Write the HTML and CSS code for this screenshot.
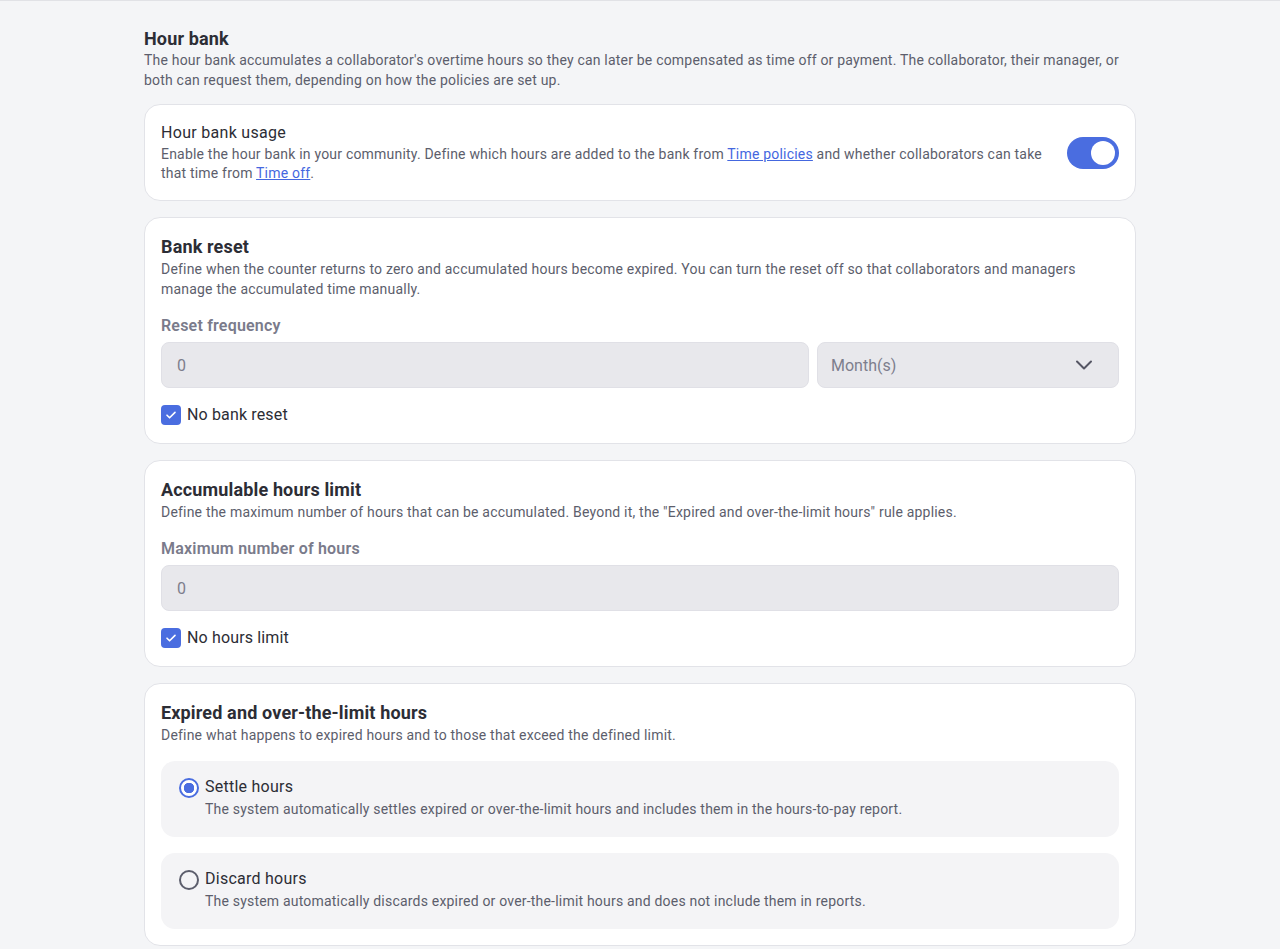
FILE: index.html
```html
<!DOCTYPE html>
<html lang="en">
<head>
  <meta charset="UTF-8">
  <title>Hour bank</title>
  <link rel="stylesheet" href="styles.css">
</head>
<body>

  <div class="page">

    <div class="intro">
      <h1>Hour bank</h1>
      <p>The hour bank accumulates a collaborator's overtime hours so they can later be compensated as time off or payment. The collaborator, their manager, or both can request them, depending on how the policies are set up.</p>
    </div>

    <div class="card card-row">
      <div>
        <h3>Hour bank usage</h3>
        <p>Enable the hour bank in your community. Define which hours are added to the bank from <a href="#">Time policies</a> and whether collaborators can take that time from <a href="#">Time off</a>.</p>
      </div>
      <span class="toggle on"><span class="knob"></span></span>
    </div>

    <div class="card">
      <h2>Bank reset</h2>
      <p>Define when the counter returns to zero and accumulated hours become expired. You can turn the reset off so that collaborators and managers manage the accumulated time manually.</p>
      <div class="field-label">Reset frequency</div>
      <div class="field-row">
        <div class="input">0</div>
        <div class="input select">
          Month(s)
          <svg width="20" height="20" viewBox="0 0 20 20" fill="none" stroke="#555664" stroke-width="2" stroke-linecap="round" stroke-linejoin="round"><path d="M3 6.5l7 7 7-7"/></svg>
        </div>
      </div>
      <label class="check">
        <span class="box"><svg width="12" height="12" viewBox="0 0 12 12" fill="none" stroke="#fff" stroke-width="1.6" stroke-linecap="round" stroke-linejoin="round"><path d="M2 6.2l2.6 2.6L10 3.4"/></svg></span>
        No bank reset
      </label>
    </div>

    <div class="card">
      <h2>Accumulable hours limit</h2>
      <p>Define the maximum number of hours that can be accumulated. Beyond it, the "Expired and over-the-limit hours" rule applies.</p>
      <div class="field-label">Maximum number of hours</div>
      <div class="field-row">
        <div class="input">0</div>
      </div>
      <label class="check">
        <span class="box"><svg width="12" height="12" viewBox="0 0 12 12" fill="none" stroke="#fff" stroke-width="1.6" stroke-linecap="round" stroke-linejoin="round"><path d="M2 6.2l2.6 2.6L10 3.4"/></svg></span>
        No hours limit
      </label>
    </div>

    <div class="card card-options">
      <h2>Expired and over-the-limit hours</h2>
      <p>Define what happens to expired hours and to those that exceed the defined limit.</p>
      <div class="options">
        <div class="option">
          <span class="radio checked"></span>
          <div>
            <div class="option-title">Settle hours</div>
            <p>The system automatically settles expired or over-the-limit hours and includes them in the hours-to-pay report.</p>
          </div>
        </div>
        <div class="option">
          <span class="radio"></span>
          <div>
            <div class="option-title">Discard hours</div>
            <p>The system automatically discards expired or over-the-limit hours and does not include them in reports.</p>
          </div>
        </div>
      </div>
    </div>

  </div>

</body>
</html>
```

FILE: styles.css
```css
body {
  margin: 0;
  background: #f4f5f7;
  border-top: 1px solid #e1e2e6;
  font-family: Roboto, "Liberation Sans", sans-serif;
  color: #2c2d35;
}

.page {
  max-width: 992px;
  margin: 0 auto;
  padding: 26px 0 24px;
  display: flex;
  flex-direction: column;
  gap: 16px;
}

.intro {
  margin-bottom: -2px;
}

h1 {
  font-size: 18px;
  font-weight: 700;
  line-height: 24px;
  letter-spacing: 0.15px;
  margin: 0 0 -1px;
}

h2 {
  font-size: 18px;
  font-weight: 700;
  line-height: 24px;
  letter-spacing: 0.15px;
  margin: 1px 0 0;
}

h3 {
  font-size: 16px;
  font-weight: 400;
  line-height: 20px;
  letter-spacing: 0.3px;
  margin: 0;
}

p {
  font-size: 14px;
  line-height: 20px;
  letter-spacing: 0.2px;
  color: #5c5e6c;
  margin: 0;
}

a {
  color: #4467df;
}

.card {
  background: #fff;
  border: 1px solid #e2e3e8;
  border-radius: 16px;
  padding: 16px 16px 18px;
}

.card-row {
  display: flex;
  align-items: center;
  gap: 20px;
  padding: 18px 16px 17px;
}

.card-row p {
  line-height: 19px;
  margin-top: 2px;
}

.card-options {
  padding-bottom: 16px;
}

.toggle {
  flex: none;
  width: 52px;
  height: 32px;
  border-radius: 16px;
  background: #4a6de0;
  display: flex;
  align-items: center;
  justify-content: flex-end;
  padding: 0 4px;
  box-sizing: border-box;
}

.knob {
  width: 24px;
  height: 24px;
  border-radius: 50%;
  background: #fff;
}

.field-label {
  margin-top: 17px;
  font-size: 16px;
  font-weight: 600;
  line-height: 20px;
  letter-spacing: 0.2px;
  color: #7a7b8b;
}

.field-row {
  display: flex;
  gap: 8px;
  margin-top: 6px;
}

.input {
  flex: 1;
  height: 46px;
  box-sizing: border-box;
  background: #e8e8ec;
  border: 1px solid #e0e0e6;
  border-radius: 8px;
  padding: 0 15px;
  display: flex;
  align-items: center;
  font-size: 16px;
  color: #7d7e8c;
}

.select {
  flex: none;
  width: 302px;
  justify-content: space-between;
  padding: 0 24px 0 13px;
}

.check {
  display: flex;
  align-items: center;
  gap: 6px;
  margin-top: 17px;
  font-size: 16px;
  line-height: 20px;
  letter-spacing: 0.15px;
  color: #2c2d35;
}

.box {
  width: 20px;
  height: 20px;
  border-radius: 4px;
  background: #4a6de0;
  display: flex;
  align-items: center;
  justify-content: center;
}

.options {
  display: flex;
  flex-direction: column;
  gap: 16px;
  margin-top: 16px;
}

.option {
  background: #f4f4f6;
  border-radius: 14px;
  padding: 16px 18px 18px;
  display: flex;
  align-items: flex-start;
  gap: 6px;
}

.option p {
  margin-top: 2px;
}

.option-title {
  font-size: 16px;
  line-height: 20px;
  letter-spacing: 0.25px;
}

.radio {
  flex: none;
  width: 20px;
  height: 20px;
  box-sizing: border-box;
  border: 2px solid #5c5e6c;
  border-radius: 50%;
  margin-top: 1px;
}

.radio.checked {
  border-color: #4a6de0;
  background: radial-gradient(circle, #4a6de0 5px, #fff 5.5px);
}
```
